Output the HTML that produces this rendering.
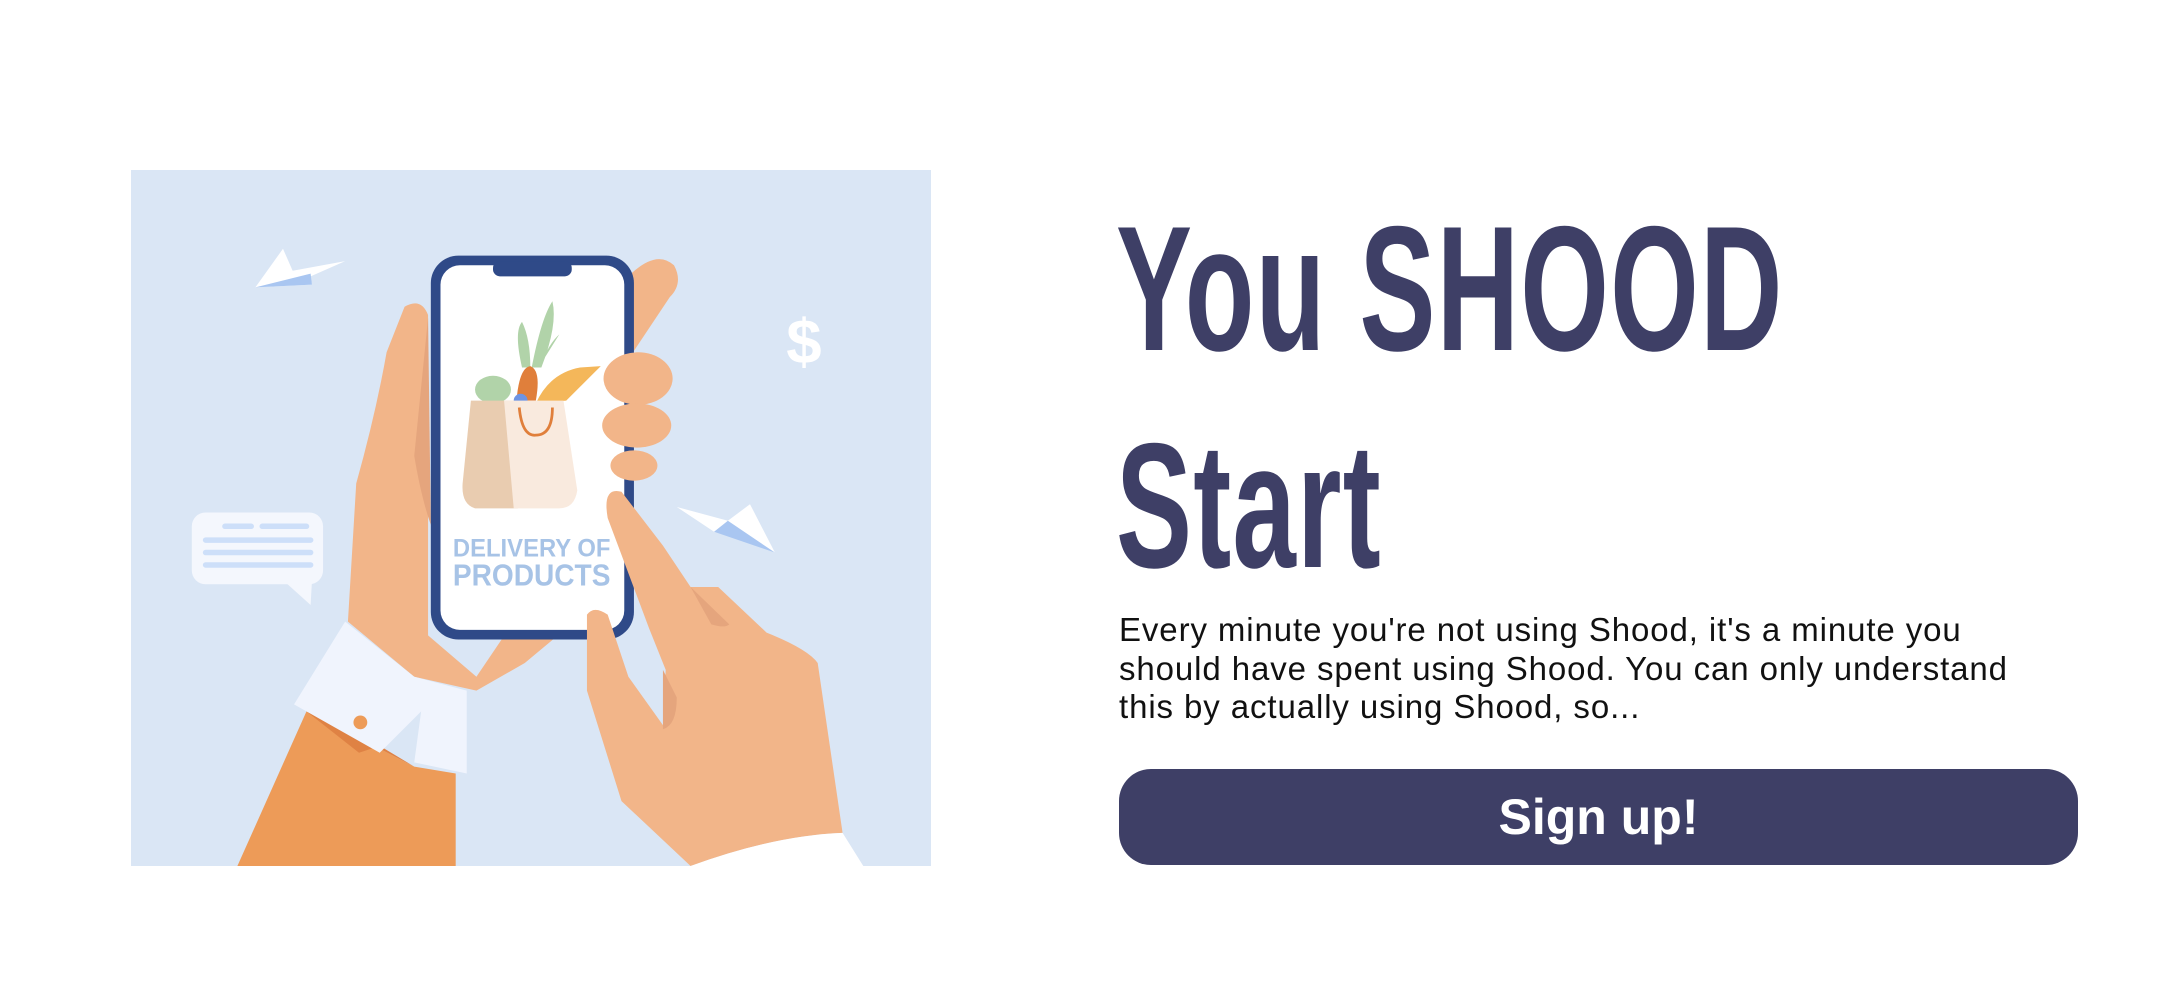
<!DOCTYPE html>
<html><head><meta charset="utf-8"><style>
html,body{margin:0;padding:0;background:#fff;width:2166px;height:984px;overflow:hidden}
.ill{position:absolute;left:131px;top:170px;width:800px;height:696px}
.t{position:absolute;left:1116px;color:#3e3f66;font-family:"Liberation Sans",sans-serif;font-weight:bold;font-size:178px;line-height:1;transform-origin:0 0;transform:scaleX(0.64);white-space:nowrap;letter-spacing:2px}
.p{position:absolute;left:1119px;top:611px;font-family:"Liberation Sans",sans-serif;font-size:33px;line-height:38.5px;color:#111;white-space:nowrap;letter-spacing:0.9px}
.b{position:absolute;left:1119px;top:769px;width:959px;height:96px;border-radius:32px;background:#3e3f66;color:#fff;font-family:"Liberation Sans",sans-serif;font-weight:bold;font-size:50px;text-align:center;line-height:96px}
</style></head><body>
<svg class="ill" viewBox="95 123 579 504" preserveAspectRatio="none">
<rect x="95" y="123" width="579" height="504" fill="#dae6f5"/>
<polygon points="185,208 205,180 212,196 250,189 225,200 226,206" fill="#fff"/>
<polygon points="185,208 225,198 226,206" fill="#a9c6f1"/>
<polygon points="490,367 527,377 543,365 561,400 540,391 517,385" fill="#fff"/>
<polygon points="517,385 527,377 561,400" fill="#a9c6f1"/>
<text x="582" y="263" font-family="Liberation Sans" font-weight="bold" font-size="46" fill="#fff" text-anchor="middle">$</text>
<rect x="139" y="371" width="95" height="52" rx="10" fill="#f4f7fd"/>
<polygon points="205,420 226,420 225,438" fill="#f4f7fd"/>
<g stroke="#cddff9" stroke-width="4" stroke-linecap="round"><line x1="163" y1="381" x2="182" y2="381"/><line x1="190" y1="381" x2="222" y2="381"/><line x1="149" y1="391" x2="225" y2="391"/><line x1="149" y1="400" x2="225" y2="400"/><line x1="149" y1="409" x2="225" y2="409"/></g>
<polygon points="172,627 222,515 300,555 330,560 330,627" fill="#ed9b58"/>
<polygon points="222,515 300,555 275,540 260,545" fill="#df8244"/>
<path d="M252,450 L258,350 Q272,300 280,255 L293,222 Q305,215 310,228 L310,460 L345,490 L372,450 L410,455 L380,480 L345,500 L300,490 Z" fill="#f2b589"/>
<path d="M310,230 L300,330 Q305,360 312,380 Z" fill="#e5a57d"/>
<polygon points="213,510 250,450 300,490 338,500 338,560 300,552 305,515 275,545" fill="#f0f4fd"/>
<circle cx="261" cy="523" r="5" fill="#ed9b58"/>
<path d="M455,200 Q475,180 488,192 Q495,205 485,215 L455,260 Z" fill="#f2b589"/>
<rect x="312" y="185" width="147" height="278" rx="20" fill="#2f4a88"/>
<rect x="319" y="192" width="133" height="264" rx="14" fill="#fff"/>
<rect x="357" y="189" width="57" height="11" rx="5" fill="#2f4a88"/>
<ellipse cx="462" cy="274" rx="25" ry="19" fill="#f2b589"/>
<ellipse cx="461" cy="308" rx="25" ry="16" fill="#f2b589"/>
<ellipse cx="459" cy="337" rx="17" ry="11" fill="#f2b589"/>
<path d="M378,266 Q372,240 378,233 Q384,245 384,266 Z M385,266 Q392,230 400,218 Q404,235 392,266 Z M390,266 Q398,248 405,242 Z" fill="#b1d3a9"/>
<ellipse cx="357" cy="282" rx="13" ry="10" fill="#b1d3a9"/>
<path d="M374,290 Q376,266 384,265 Q392,268 388,290 Z" fill="#e07f3b"/>
<path d="M388,292 Q398,270 420,266 L435,265 L410,290 Z" fill="#f4b75a"/>
<circle cx="377" cy="290" r="5" fill="#6e94e3"/>
<path d="M341,290 L372,290 L375,368 L344,368 Q334,365 335,350 Z" fill="#e9ccb0"/>
<path d="M365,290 L408,290 L418,355 Q416,368 405,368 L372,368 Z" fill="#f9eade"/>
<path d="M376,295 Q378,316 388,315 Q400,315 400,295" fill="none" stroke="#e07f3b" stroke-width="2"/>
<text x="328" y="403" font-family="Liberation Sans" font-weight="bold" font-size="18" fill="#a7c3e6" textLength="114" lengthAdjust="spacingAndGlyphs">DELIVERY OF</text>
<text x="328" y="424" font-family="Liberation Sans" font-weight="bold" font-size="22" fill="#a7c3e6" textLength="114" lengthAdjust="spacingAndGlyphs">PRODUCTS</text>
<path d="M425,445 Q430,438 440,445 L455,490 L480,525 L482,485 L470,455 L440,375 Q436,352 450,356 L480,395 L500,425 L520,425 L555,458 Q585,470 592,480 L610,603 Q560,605 500,627 L450,580 L425,500 Z" fill="#f2b589"/>
<path d="M480,485 L480,528 Q490,525 490,505 Z M500,425 L515,452 Q525,455 528,452 Z" fill="#e5a57d"/>
<path d="M500,627 Q560,605 610,603 L625,627 Z" fill="#fff"/>
</svg>
<div class="t" style="top:200px">You SHOOD</div>
<div class="t" style="top:417px">Start</div>
<div class="p">Every minute you're not using Shood, it's a minute you<br>should have spent using Shood. You can only understand<br>this by actually using Shood, so...</div>
<div class="b">Sign up!</div>
</body></html>
